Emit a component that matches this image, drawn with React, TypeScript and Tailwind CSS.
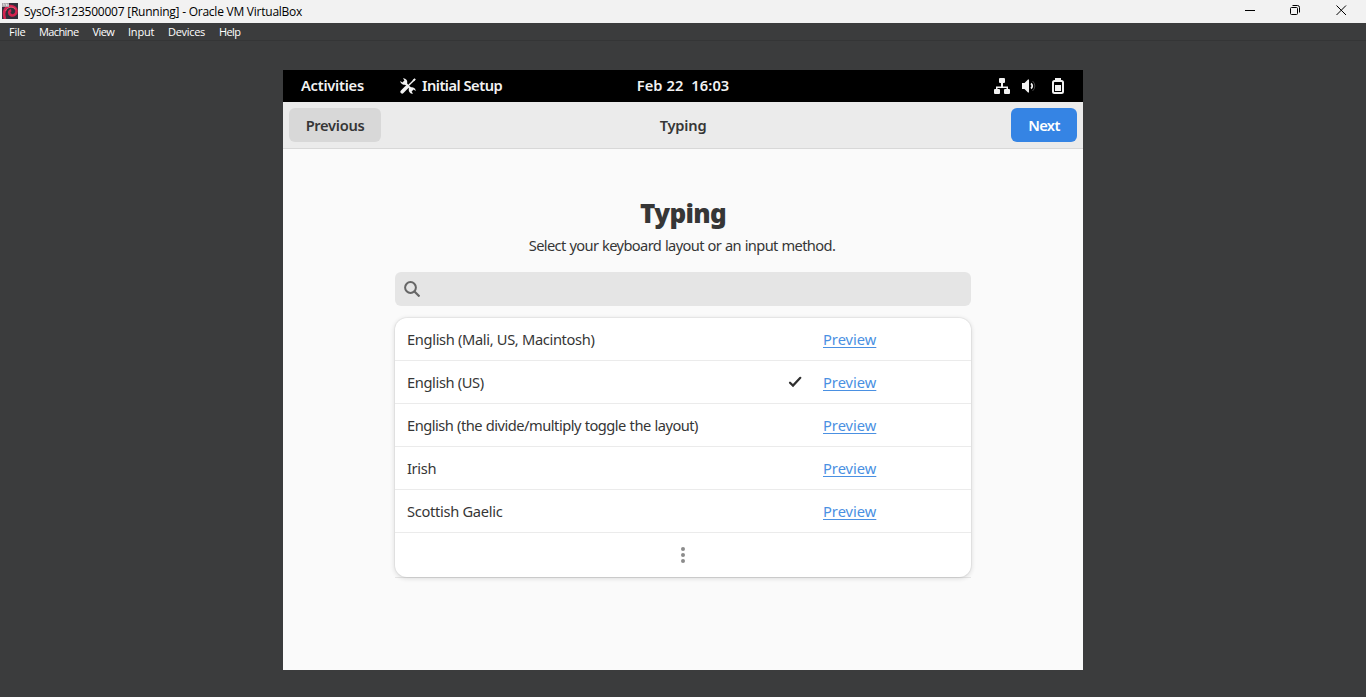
import React from "react";

const layouts = [
  { name: "English (Mali, US, Macintosh)", tracking: "tracking-[-0.34px]" },
  { name: "English (US)", selected: true, tracking: "tracking-[-0.37px]" },
  { name: "English (the divide/multiply toggle the layout)", tracking: "tracking-[-0.5px] [word-spacing:0.4px]" },
  { name: "Irish", tracking: "tracking-[-0.35px]" },
  { name: "Scottish Gaelic", tracking: "tracking-[-0.3px]" },
];

const menu = [
  { name: "File", style: "w-[30px] tracking-[-0.25px]" },
  { name: "Machine", style: "w-[53.5px] tracking-[-0.6px]" },
  { name: "View", style: "w-[35.5px] tracking-[-0.6px]" },
  { name: "Input", style: "w-[40px] tracking-[-0.2px]" },
  { name: "Devices", style: "w-[51px] tracking-[-0.3px]" },
  { name: "Help", style: "w-[30px] tracking-[-0.6px]" },
];

function DebianIcon() {
  return (
    <svg width="16" height="16" viewBox="0 0 16 16">
      <rect width="16" height="16" fill="#33303c" />
      <path d="M3 16C1.5 11 1.8 6.5 5 4.3C8.5 2 13.5 3.3 14.4 7.2C15.2 11 11.5 13.4 8.800 12C6.600 10.800 6.600 7.800 9.200 7.200" fill="none" stroke="#d4234f" strokeWidth="2.6" />
      <path d="M3.6 8C5 3.8 11.5 2.6 13.6 6.4" fill="none" stroke="#ee6480" strokeWidth="0.9" />
      <rect width="7" height="4" fill="#a9a3a8" />
      <path d="M1 1h1v2M3.5 1h1v2M6 1v2" fill="none" stroke="#eee" strokeWidth="0.8" />
    </svg>
  );
}

function ToolsIcon() {
  return (
    <svg width="16" height="16" viewBox="0 0 16 16" fill="none" stroke="#f2f2f2">
      <path d="M4.4 4.4L12 12" strokeWidth="2.4" />
      <path d="M3 0.2A3.9 3.9 0 0 1 7 5.400A3.900 3.900 0 0 1 0.200 3L2.400 4.400L4.400 2.400Z" fill="#f2f2f2" stroke="none" />
      <path d="M13 15.800A3.900 3.900 0 0 1 9 10.600A3.900 3.900 0 0 1 15.800 13L13.600 11.600L11.600 13.600Z" fill="#f2f2f2" stroke="none" />
      <path d="M14.8 1.2L8.8 7.2" stroke="#000" strokeWidth="3" />
      <path d="M14.6 1.4L8 8" strokeWidth="1.4" />
      <path d="M12.4 2.2L14.6 0.2L15.8 1.4L13.8 3.6Z" fill="#f2f2f2" stroke="none" />
      <path d="M6.4 9.6L2.2 13.8" strokeWidth="3.6" strokeLinecap="round" />
    </svg>
  );
}

export default function App() {
  return (
    <div className="flex h-[697px] w-[1366px] flex-col overflow-hidden bg-[#3b3c3d]">
      <header className="flex h-[23px] shrink-0 items-center bg-[#f2f2f2] pl-[2px] font-['Open_Sans','Noto_Sans',sans-serif] text-black">
        <div className="mt-[-2px]"><DebianIcon /></div>
        <span className="ml-[6px] whitespace-pre text-[12px] leading-[22px] tracking-[-0.24px]">SysOf-3123500007 [Running] - Oracle VM VirtualBox</span>
        <svg className="ml-auto" width="122" height="23" viewBox="0 0 122 23" fill="none" stroke="#000" strokeWidth="1">
          <path d="M1 10.5h10" />
          <rect x="46.5" y="7.5" width="7" height="7" rx="1" />
          <path d="M48.5 5.5h5a2 2 0 0 1 2 2v5" />
          <path d="M92.5 5.5l9.5 9.5M102 5.5L92.5 15" />
        </svg>
      </header>
      <nav className="flex h-[18px] shrink-0 items-center border-b border-[#343536] pl-[9px] font-['Open_Sans','Noto_Sans',sans-serif] text-[11px] leading-[17px] text-white">
        {menu.map((item) => (
          <span key={item.name} className={item.style}>{item.name}</span>
        ))}
      </nav>

      <main className="mt-[29px] flex h-[600px] w-[800px] shrink-0 flex-col self-center bg-[#fafafa] font-['Noto_Sans',sans-serif] text-[14.67px] text-[#363636]">
        <div className="grid h-8 shrink-0 grid-cols-[1fr_auto_1fr] items-center bg-black leading-[20px] font-semibold text-[#f2f2f2]">
          <div className="flex items-center pl-[18px]">
            <span className="w-[99px] pb-[2px] tracking-[-0.25px]">Activities</span>
            <ToolsIcon />
            <span className="ml-[6px] pb-[2px] tracking-[-0.5px]">Initial Setup</span>
          </div>
          <span className="whitespace-pre pb-[2px] tracking-[0.1px]">Feb 22  16:03</span>
          <div className="flex items-center justify-end pr-[17px]">
            <svg width="16" height="16" viewBox="0 0 16 16" fill="#f2f2f2">
              <rect x="5" y="0" width="6" height="5" rx="1" />
              <rect x="0" y="11" width="6" height="5" rx="1" />
              <rect x="10" y="11" width="6" height="5" rx="1" />
              <path d="M7 4h2v4.500h5v3.500h-1.500v-2h-9v2H2V8.500h5z" />
            </svg>
            <svg className="ml-[12px]" width="16" height="16" viewBox="0 0 16 16">
              <path d="M0 5h2.500L6 1.500h1v13H6L2.500 11H0z" fill="#f2f2f2" />
              <path d="M9 5.500a3.200 3.200 0 0 1 0 5" fill="none" stroke="#f2f2f2" strokeWidth="1.8" />
              <path d="M10.500 3a6.500 6.500 0 0 1 0 10" fill="none" stroke="#444" strokeWidth="1" />
            </svg>
            <svg className="ml-[12px]" width="16" height="16" viewBox="0 0 16 16">
              <path d="M5 0h6v3H5z" fill="#f2f2f2" />
              <rect x="3" y="3" width="10" height="12" rx="1.5" fill="none" stroke="#f2f2f2" strokeWidth="2" />
              <rect x="5" y="7" width="6" height="6" fill="#f2f2f2" />
            </svg>
          </div>
        </div>

        <div className="grid h-[47px] shrink-0 grid-cols-[1fr_auto_1fr] items-center border-b border-[#d8d8d8] bg-[#ebebeb] px-[6px] font-semibold">
          <button className="h-[34px] w-[92px] rounded-[6px] bg-[#d8d8d8] tracking-[-0.3px]">Previous</button>
          <span className="tracking-[-0.2px]">Typing</span>
          <button className="h-[34px] w-[66px] justify-self-end rounded-[6px] bg-[#3584e4] tracking-[-0.6px] text-white">Next</button>
        </div>

        <section className="flex flex-col items-center">
          <h1 className="mt-[46px] text-[26px] leading-[36px] font-black tracking-[-0.7px]">Typing</h1>
          <p className="mt-[4px] pr-[2px] leading-[20px] tracking-[-0.63px] [word-spacing:0.55px]">Select your keyboard layout or an input method.</p>
          <div className="mt-[17px] flex h-[34px] w-[576px] items-center rounded-[6px] bg-[#e5e5e5] pl-[9px]">
            <svg width="16" height="16" viewBox="0 0 16 16" fill="none" stroke="#666" strokeWidth="2">
              <circle cx="6.5" cy="6.5" r="5.4" />
              <path d="M10.5 10.5l5 5" strokeWidth="2.2" />
            </svg>
          </div>
          <div className="mt-[12px] w-[576px] border-b border-[#e6e6e6]">
            <div className="h-[259px] overflow-hidden rounded-[12px] bg-white shadow-[0_0_0_1px_rgba(0,0,0,0.04),0_1px_4px_1px_rgba(0,0,0,0.11)]">
              {layouts.map((layout) => (
                <div key={layout.name} className="flex h-[43px] items-center border-b border-[#ebebeb] pl-[12px]">
                  <span className={"w-[381px] whitespace-nowrap " + layout.tracking}>{layout.name}</span>
                  <div className="w-[35px]">
                    {layout.selected && (
                      <svg width="14" height="12" viewBox="0 0 14 12" fill="none" stroke="#303030" strokeWidth="2.2">
                        <path d="M2 6.700l3 2.900L12.300 1.800" strokeLinecap="round" />
                      </svg>
                    )}
                  </div>
                  <a className="text-[#4a90e2] underline decoration-1 underline-offset-2">Preview</a>
                </div>
              ))}
              <div className="flex h-[44px] items-center justify-center">
                <svg width="4" height="16" viewBox="0 0 4 16" fill="#8c8c8c">
                  <circle cx="2" cy="2" r="2" />
                  <circle cx="2" cy="8" r="2" />
                  <circle cx="2" cy="14" r="2" />
                </svg>
              </div>
            </div>
          </div>
        </section>
      </main>
    </div>
  );
}
